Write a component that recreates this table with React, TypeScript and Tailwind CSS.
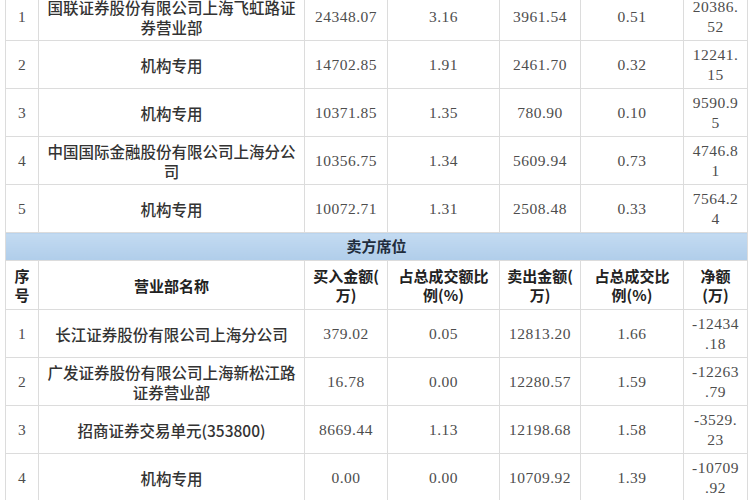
const zh = '"Noto Sans CJK SC", "Noto Sans", sans-serif'
const num = '"Liberation Serif", "Noto Sans CJK SC", serif'

type Row = { no: string; name: string[]; buy: string; buyPct: string; sell: string; sellPct: string; net: string[] }

const buyRows: Row[] = [
  { no: '1', name: ['国联证券股份有限公司上海飞虹路证', '券营业部'], buy: '24348.07', buyPct: '3.16', sell: '3961.54', sellPct: '0.51', net: ['20386.', '52'] },
  { no: '2', name: ['机构专用'], buy: '14702.85', buyPct: '1.91', sell: '2461.70', sellPct: '0.32', net: ['12241.', '15'] },
  { no: '3', name: ['机构专用'], buy: '10371.85', buyPct: '1.35', sell: '780.90', sellPct: '0.10', net: ['9590.9', '5'] },
  { no: '4', name: ['中国国际金融股份有限公司上海分公', '司'], buy: '10356.75', buyPct: '1.34', sell: '5609.94', sellPct: '0.73', net: ['4746.8', '1'] },
  { no: '5', name: ['机构专用'], buy: '10072.71', buyPct: '1.31', sell: '2508.48', sellPct: '0.33', net: ['7564.2', '4'] },
]

const sellRows: Row[] = [
  { no: '1', name: ['长江证券股份有限公司上海分公司'], buy: '379.02', buyPct: '0.05', sell: '12813.20', sellPct: '1.66', net: ['-12434', '.18'] },
  { no: '2', name: ['广发证券股份有限公司上海新松江路', '证券营业部'], buy: '16.78', buyPct: '0.00', sell: '12280.57', sellPct: '1.59', net: ['-12263', '.79'] },
  { no: '3', name: ['招商证券交易单元(353800)'], buy: '8669.44', buyPct: '1.13', sell: '12198.68', sellPct: '1.58', net: ['-3529.', '23'] },
  { no: '4', name: ['机构专用'], buy: '0.00', buyPct: '0.00', sell: '10709.92', sellPct: '1.39', net: ['-10709', '.92'] },
]

const td = 'border border-[#dcdcdc] text-center align-middle p-0'

function Lines({ lines }: { lines: string[] }) {
  return (
    <>
      {lines.map((l, i) => (
        <div key={i}>{l}</div>
      ))}
    </>
  )
}

function DataRow({ r }: { r: Row }) {
  const numCell = `${td} text-[15.5px] tracking-[0.5px] text-[#4d4d4d]`
  return (
    <tr className="h-[48px]">
      <td className={numCell} style={{ fontFamily: num }}>{r.no}</td>
      <td className={`${td} text-[15.5px] font-medium leading-[20px] text-[#333]`} style={{ fontFamily: zh }}>
        <Lines lines={r.name} />
      </td>
      <td className={numCell} style={{ fontFamily: num }}>{r.buy}</td>
      <td className={numCell} style={{ fontFamily: num }}>{r.buyPct}</td>
      <td className={numCell} style={{ fontFamily: num }}>{r.sell}</td>
      <td className={numCell} style={{ fontFamily: num }}>{r.sellPct}</td>
      <td className={`${numCell} leading-[20px]`} style={{ fontFamily: num }}>
        <Lines lines={r.net} />
      </td>
    </tr>
  )
}

export default function App() {
  const th = `${td} font-bold text-[15px] leading-[19px] text-[#222]`
  return (
    <div className="w-[750px] h-[500px] overflow-hidden bg-white">
      <div className="pl-[5px] pr-[3px] -mt-[8px]">
        <table className="w-[742px] border-collapse table-fixed">
          <colgroup>
            <col className="w-[33px]" />
            <col className="w-[266px]" />
            <col className="w-[83px]" />
            <col className="w-[112px]" />
            <col className="w-[81px]" />
            <col className="w-[103px]" />
            <col className="w-[64px]" />
          </colgroup>
          <tbody>
            {buyRows.map((r) => (
              <DataRow key={'b' + r.no} r={r} />
            ))}
            <tr className="h-[28px]">
              <td
                colSpan={7}
                className={`${td} bg-gradient-to-b from-[#c3dbf1] to-[#b0cdea] font-bold text-[15px] text-[#1f2d3d]`}
                style={{ fontFamily: zh }}
              >
                卖方席位
              </td>
            </tr>
            <tr className="h-[49px]" style={{ fontFamily: zh }}>
              <th className={th}>
                <div>序</div>
                <div>号</div>
              </th>
              <th className={th}>营业部名称</th>
              <th className={th}>
                <div>买入金额(</div>
                <div>万)</div>
              </th>
              <th className={th}>
                <div>占总成交额比</div>
                <div>例(%)</div>
              </th>
              <th className={th}>
                <div>卖出金额(</div>
                <div>万)</div>
              </th>
              <th className={th}>
                <div>占总成交比</div>
                <div>例(%)</div>
              </th>
              <th className={th}>
                <div>净额</div>
                <div>(万)</div>
              </th>
            </tr>
            {sellRows.map((r) => (
              <DataRow key={'s' + r.no} r={r} />
            ))}
          </tbody>
        </table>
      </div>
    </div>
  )
}
